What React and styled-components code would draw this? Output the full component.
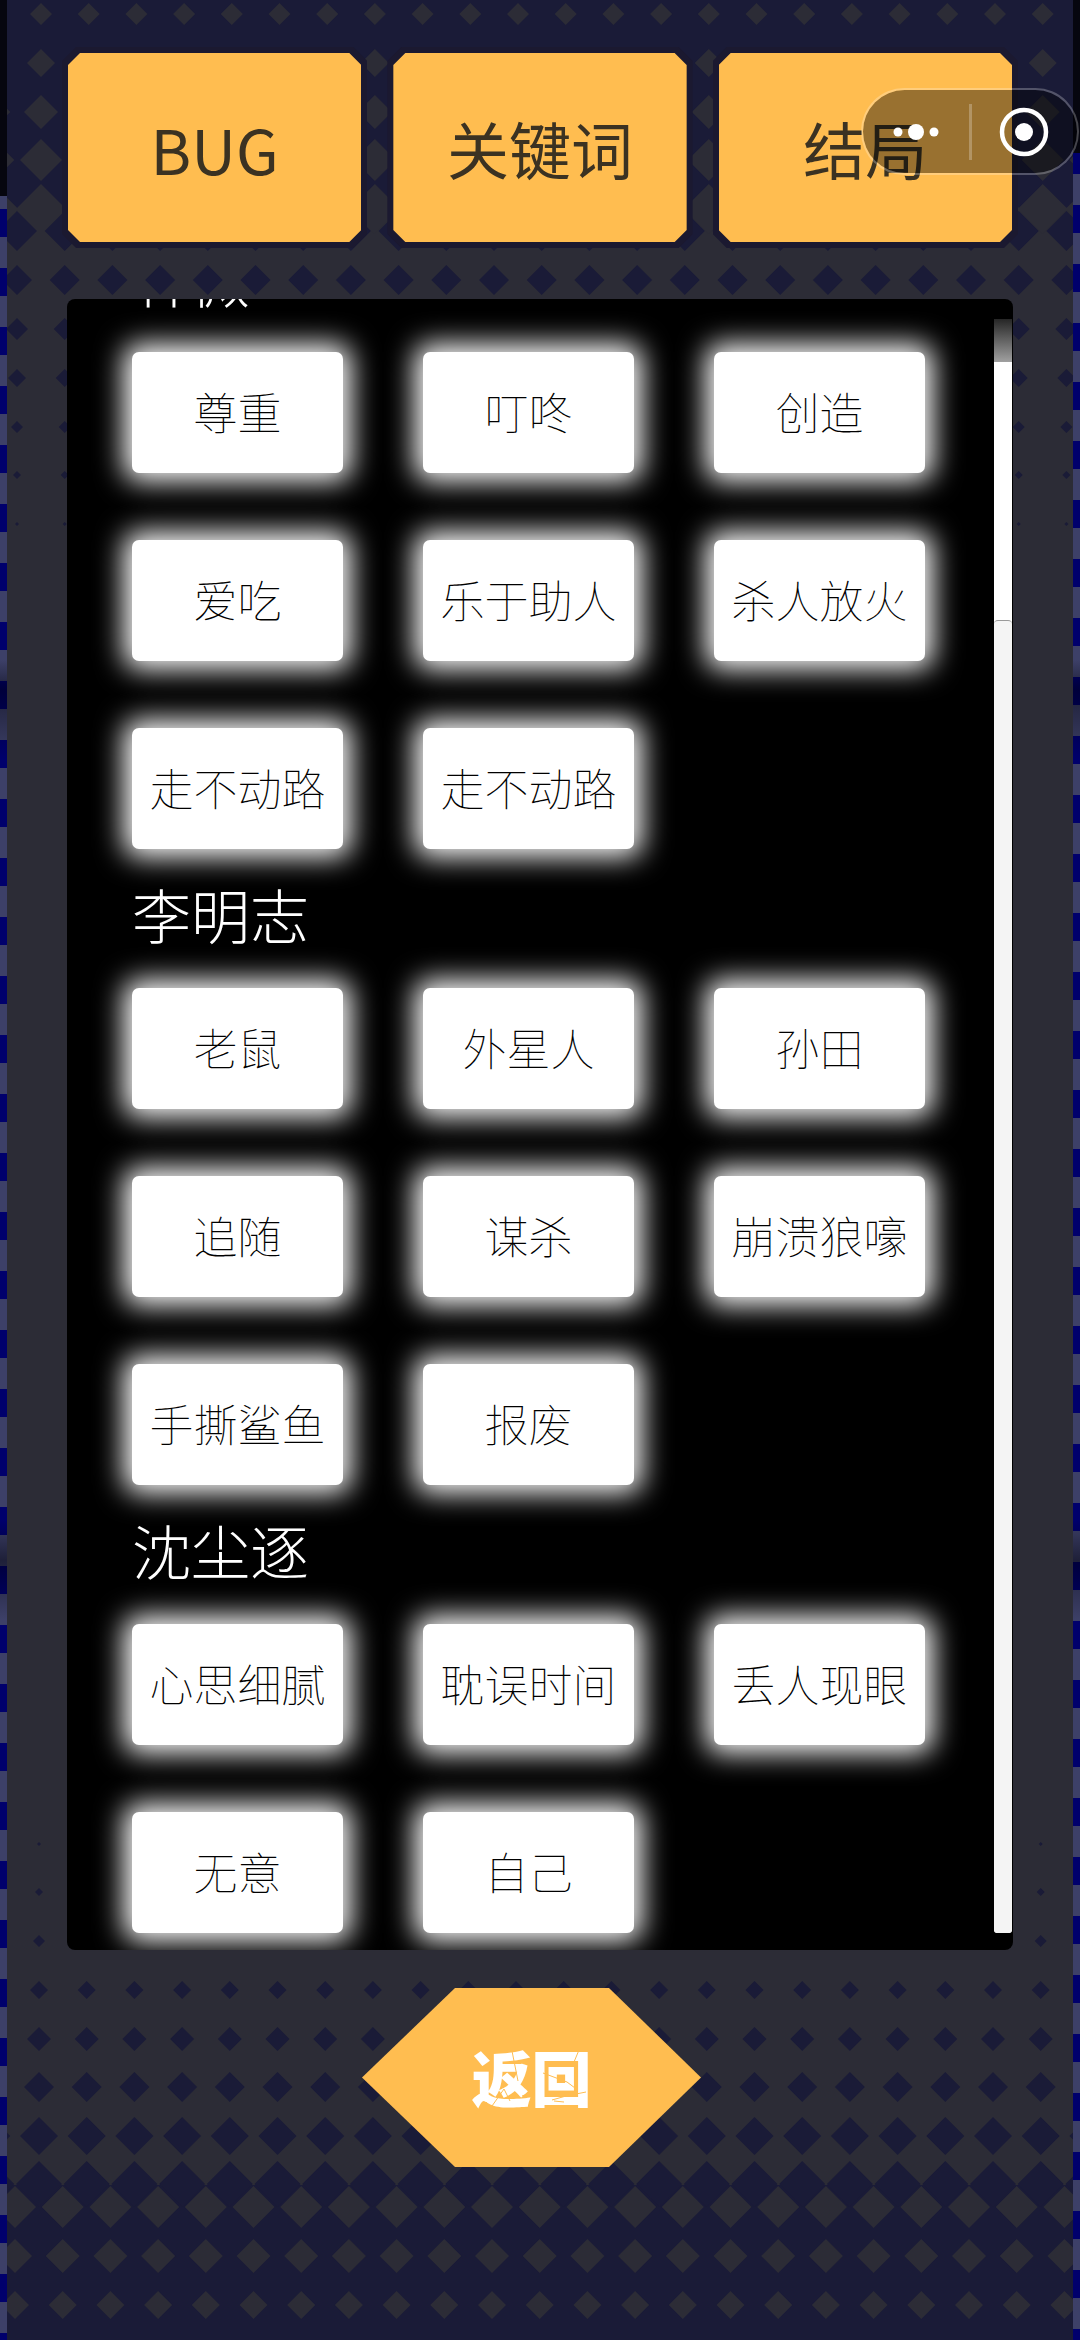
import React from 'react';
import styled, { createGlobalStyle } from 'styled-components';

const GlobalStyle = createGlobalStyle`
  * {
    box-sizing: border-box;
  }
  body {
    margin: 0;
    background: #1a1b37;
    font-family: 'Noto Sans CJK SC', 'Noto Sans', sans-serif;
  }
  button {
    margin: 0;
    padding: 0;
    border: 0;
    font-family: inherit;
    cursor: pointer;
  }
`;

const SPage = styled.div`
  position: relative;
  display: grid;
  grid-template-columns: 7px minmax(0, 1fr) 7px;
  min-height: 100vh;
  overflow: hidden;
`;

const SEdge = styled.div`
  background:
    linear-gradient(#06060f ${p => p.$start}px, transparent ${p => p.$start}px),
    linear-gradient(transparent 660px, rgba(0, 0, 10, 0.5) 690px, transparent 760px),
    linear-gradient(transparent 1520px, rgba(0, 0, 10, 0.5) 1560px, transparent 1620px),
    repeating-linear-gradient(#00006c 0 28px, #3d4068 28px 59px) 0 ${p => p.$shift}px;
`;

const SStage = styled.div`
  position: relative;
  padding: 47px 60px 0;
  background: #2c2c36;
`;

const SBackdrop = styled.svg`
  position: absolute;
  top: 0;
  left: 0;
  width: 100%;
  height: 100%;
`;

const STabs = styled.nav`
  position: relative;
  display: grid;
  grid-template-columns: repeat(3, minmax(0, 1fr));
  gap: 20px;
  margin: 0 -5px;
`;

const STabFrame = styled.div`
  padding: 6px;
  background: #1b1930;
  clip-path: polygon(14px 0, calc(100% - 14px) 0, 100% 14px, 100% calc(100% - 14px), calc(100% - 14px) 100%, 14px 100%, 0 calc(100% - 14px), 0 14px);
`;

const STab = styled.button`
  display: block;
  width: 100%;
  height: 189px;
  background: #ffbd50;
  color: #3b3222;
  font-size: 62px;
  font-weight: 400;
  clip-path: polygon(12px 0, calc(100% - 12px) 0, 100% 12px, 100% calc(100% - 12px), calc(100% - 12px) 100%, 12px 100%, 0 calc(100% - 12px), 0 12px);
`;

const SPanel = styled.main`
  position: relative;
  display: grid;
  grid-template-columns: minmax(0, 1fr) 18px;
  column-gap: 69px;
  margin-top: 51px;
  padding: 0 1px 17px 65px;
  background: #000;
  border-radius: 8px;
  overflow: hidden;
`;

const SList = styled.div`
  margin-top: -86px;
`;

const SName = styled.h2`
  margin: 0;
  padding: 25px 0 34px;
  color: #fff;
  font-size: 59px;
  font-weight: 300;
  line-height: 80px;
`;

const SGrid = styled.div`
  display: grid;
  grid-template-columns: repeat(3, minmax(0, 1fr));
  gap: 67px 80px;
`;

const SCard = styled.button`
  height: 121px;
  padding-bottom: 4px;
  background: #fff;
  border-radius: 7px;
  box-shadow: 0 0 28px 8px #fff;
  color: #000;
  font-size: 44px;
  font-weight: 100;
  white-space: nowrap;
`;

const STrack = styled.div`
  display: flex;
  flex-direction: column;
  margin-top: 20px;
  border-radius: 0 0 3px 3px;
  background: linear-gradient(#262626 0, #a0a0a0 43px, #fff 43px);
`;

const SThumb = styled.div`
  flex: 1;
  margin-top: 301px;
  border-top: 1px solid #999;
  border-radius: 4px;
  background: #f4f4f4;
`;

const SFooter = styled.footer`
  position: relative;
  display: flex;
  justify-content: center;
  padding: 38px 17px 170px 0;
`;

const SBack = styled.button`
  position: relative;
  width: 339px;
  height: 179px;
  padding-bottom: 4px;
  background: #ffbd50;
  color: #fff;
  font-size: 60px;
  font-weight: 900;
  clip-path: polygon(93px 0, calc(100% - 92px) 0, 100% 50%, calc(100% - 92px) 100%, 93px 100%, 0 50%);
`;

const SCracks = styled.svg`
  position: absolute;
  top: 0;
  left: 0;
`;

const SCapsule = styled.div`
  position: absolute;
  top: 88px;
  right: 1px;
  display: grid;
  grid-template-columns: 1fr 3px 1fr;
  align-items: center;
  width: 218px;
  height: 87px;
  border: 2px solid rgba(255, 255, 255, 0.25);
  border-radius: 44px;
  background: rgba(0, 0, 0, 0.4);
  background-clip: padding-box;
`;

const SCapsuleButton = styled.button`
  display: flex;
  justify-content: center;
  background: none;
`;

const SDivider = styled.span`
  height: 56px;
  background: rgba(255, 255, 255, 0.25);
`;

const NAVY = '#1a1b37';
const GREY = '#2c2c36';

// halftone rows: y of the row, half size of its diamonds, x of the first one
const rows = [
  { y: 14, r: 11, x: 41, fill: GREY },
  { y: 63, r: 14, x: 41, fill: GREY },
  { y: 112, r: 17, x: 41, fill: GREY },
  { y: 160, r: 21, x: 41, fill: GREY },
  { y: 209, r: 25, x: 41, fill: GREY },
  { y: 231, r: 20, x: 17, fill: NAVY },
  { y: 280, r: 15, x: 17, fill: NAVY },
  { y: 329, r: 11, x: 17, fill: NAVY },
  { y: 378, r: 9, x: 17, fill: NAVY },
  { y: 427, r: 6, x: 17, fill: NAVY },
  { y: 475, r: 4, x: 17, fill: NAVY },
  { y: 524, r: 2, x: 17, fill: NAVY },
  { y: 1844, r: 2, x: 39, fill: NAVY },
  { y: 1892, r: 4, x: 39, fill: NAVY },
  { y: 1941, r: 6, x: 39, fill: NAVY },
  { y: 1990, r: 9, x: 39, fill: NAVY },
  { y: 2039, r: 12, x: 39, fill: NAVY },
  { y: 2087, r: 15, x: 39, fill: NAVY },
  { y: 2136, r: 19, x: 39, fill: NAVY },
  { y: 2184, r: 23, x: 39, fill: NAVY },
  { y: 2207, r: 21, x: 15, fill: GREY },
  { y: 2256, r: 17, x: 15, fill: GREY },
  { y: 2305, r: 14, x: 15, fill: GREY },
];

const STEP = 47.7;

const diamonds = ({ x, y, r }) => {
  let d = '';
  for (let cx = x - STEP; cx < 1110; cx += STEP) {
    d += `M${cx.toFixed(1)} ${y - r}l${r} ${r}l${-r} ${r}l${-r} ${-r}z`;
  }
  return d;
};

const Backdrop = () => (
  <SBackdrop viewBox="7 0 1066 2340" preserveAspectRatio="xMidYMin slice" aria-hidden="true">
    <rect width="1080" height="209" fill={NAVY} />
    <rect y="2185" width="1080" height="155" fill={NAVY} />
    {rows.map(row => (
      <path key={row.y} d={diamonds(row)} fill={row.fill} />
    ))}
  </SBackdrop>
);

const tabs = ['BUG', '关键词', '结局'];

const people = [
  {
    name: '林微',
    words: ['尊重', '叮咚', '创造', '爱吃', '乐于助人', '杀人放火', '走不动路', '走不动路'],
  },
  {
    name: '李明志',
    words: ['老鼠', '外星人', '孙田', '追随', '谋杀', '崩溃狼嚎', '手撕鲨鱼', '报废'],
  },
  {
    name: '沈尘逐',
    words: ['心思细腻', '耽误时间', '丢人现眼', '无意', '自己'],
  },
];

function App() {
  return (
    <SPage>
      <GlobalStyle />
      <SEdge $start={196} $shift={32} />
      <SStage>
        <Backdrop />
        <STabs>
          {tabs.map(tab => (
            <STabFrame key={tab}>
              <STab type="button">{tab}</STab>
            </STabFrame>
          ))}
        </STabs>
        <SPanel>
          <SList>
            {people.map(person => (
              <section key={person.name}>
                <SName>{person.name}</SName>
                <SGrid>
                  {person.words.map((word, i) => (
                    <SCard type="button" key={i}>{word}</SCard>
                  ))}
                </SGrid>
              </section>
            ))}
          </SList>
          <STrack>
            <SThumb />
          </STrack>
        </SPanel>
        <SFooter>
          <SBack type="button">
            返回
            <SCracks width="339" height="179" fill="none" stroke="#ffbd50" strokeWidth="1" aria-hidden="true">
              <path d="M150 63l6 30M130 118l12-17 6 12M112 128l13-14M181 85l24 9M205 94l8 6M217 62l-5 12M190 112l14-4 20-4M192 113l10 1M160 108l8-3" />
            </SCracks>
          </SBack>
        </SFooter>
      </SStage>
      <SEdge $start={153} $shift={28} />
      <SCapsule>
        <SCapsuleButton type="button" aria-label="更多">
          <svg width="46" height="18" fill="#fff">
            <circle cx="5" cy="9" r="4.5" />
            <circle cx="23" cy="9" r="8" />
            <circle cx="41" cy="9" r="4.5" />
          </svg>
        </SCapsuleButton>
        <SDivider />
        <SCapsuleButton type="button" aria-label="关闭">
          <svg width="50" height="50">
            <circle cx="25" cy="25" r="22" fill="none" stroke="#fff" strokeWidth="4.5" />
            <circle cx="25" cy="25" r="9" fill="#fff" />
          </svg>
        </SCapsuleButton>
      </SCapsule>
    </SPage>
  );
}

export default App;
